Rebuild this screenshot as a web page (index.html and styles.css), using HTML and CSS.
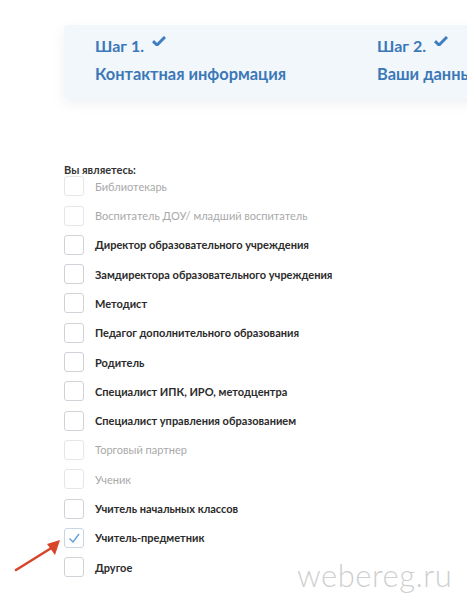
FILE: index.html
```html
<!DOCTYPE html>
<html lang="ru">
<head>
<meta charset="utf-8">
<title>Регистрация</title>
<link rel="stylesheet" href="styles.css">
</head>
<body>
<div class="page">
  <div class="steps">
    <div class="step step-first">
      <div class="step-title">Шаг 1.
        <svg class="step-check" viewBox="0 0 14 10" width="14" height="10"><path d="M1 5.2 L5 9 L13 1" fill="none" stroke="currentColor" stroke-width="3" stroke-linejoin="round"/></svg>
      </div>
      <div class="step-name">Контактная информация</div>
    </div>
    <div class="step">
      <div class="step-title">Шаг 2.
        <svg class="step-check" viewBox="0 0 14 10" width="14" height="10"><path d="M1 5.2 L5 9 L13 1" fill="none" stroke="currentColor" stroke-width="3" stroke-linejoin="round"/></svg>
      </div>
      <div class="step-name">Ваши данные</div>
    </div>
  </div>

  <form class="roles">
    <div class="roles-label">Вы являетесь:</div>
    <label class="role is-disabled"><span class="box"></span>Библиотекарь</label>
    <label class="role is-disabled"><span class="box"></span>Воспитатель ДОУ/ младший воспитатель</label>
    <label class="role"><span class="box"></span>Директор образовательного учреждения</label>
    <label class="role"><span class="box"></span>Замдиректора образовательного учреждения</label>
    <label class="role"><span class="box"></span>Методист</label>
    <label class="role"><span class="box"></span>Педагог дополнительного образования</label>
    <label class="role"><span class="box"></span>Родитель</label>
    <label class="role"><span class="box"></span>Специалист ИПК, ИРО, методцентра</label>
    <label class="role"><span class="box"></span>Специалист управления образованием</label>
    <label class="role is-disabled"><span class="box"></span>Торговый партнер</label>
    <label class="role is-disabled"><span class="box"></span>Ученик</label>
    <label class="role"><span class="box"></span>Учитель начальных классов</label>
    <label class="role is-checked"><span class="box"><svg viewBox="0 0 20 20" width="20" height="20"><path d="M5.5 10.5 L9 14 L15 6" fill="none" stroke="#5b9fd6" stroke-width="1.3"/></svg></span>Учитель-предметник</label>
    <label class="role"><span class="box"></span>Другое</label>
  </form>

  <svg class="pointer" viewBox="0 0 60 40" width="60" height="40">
    <path d="M2 33 L39 10" stroke="#d7462b" stroke-width="2.6" stroke-linecap="round"/>
    <path d="M46 3 L33 7 L41 18 Z" fill="#d7462b"/>
  </svg>

  <div class="mark">webereg.ru</div>
</div>
</body>
</html>
```

FILE: styles.css
```css
html, body {
  margin: 0;
  padding: 0;
  background: #fff;
}

.page {
  position: relative;
  width: 467px;
  height: 600px;
  overflow: hidden;
  font-family: Lato, "Noto Sans", sans-serif;
}

/* step header card; the second step runs past the right edge */
.steps {
  display: flex;
  margin: 25px 0 0 64px;
  padding: 13px 0 0 31px;
  height: 60px;
  width: 480px;
  background: #f2f7fc;
  box-shadow: 0 5px 12px rgba(120, 140, 170, 0.13);
  border-radius: 3px 0 0 3px;
  color: #3b78b7;
  font-weight: 700;
  white-space: nowrap;
}

.step {
  display: flex;
  flex-direction: column;
  gap: 12px;
}

.step-first {
  width: 282px;
  flex: none;
}

.step-title {
  display: flex;
  align-items: flex-start;
  gap: 8px;
  font-size: 16px;
  line-height: 16px;
}

.step-check {
  margin-top: -2px;
  color: #3f7fc0;
}

.step-name {
  font-size: 16.4px;
  line-height: 16px;
}

/* role checklist */
.roles {
  display: flex;
  flex-direction: column;
  gap: 9.3px;
  margin: 66px 0 0 64px;
  font-size: 11px;
  font-weight: 700;
  color: #2b2b2b;
}

.roles-label {
  line-height: 12px;
  margin-bottom: -9px;
  color: #333;
}

.role {
  display: flex;
  align-items: center;
  gap: 11px;
  height: 20px;
}

.box {
  flex: none;
  width: 18px;
  height: 18px;
  border: 1px solid #cfd3d8;
  border-radius: 3px;
  background: #fff;
}

.box svg {
  display: block;
  margin: -1px;
}

.role.is-disabled {
  color: #a9a9a9;
  font-weight: 400;
}

.role.is-disabled .box {
  border-color: #e4e6e9;
}

.role.is-checked .box {
  border-color: #c9d6e2;
}

/* annotation arrow */
.pointer {
  position: absolute;
  left: 14px;
  top: 537px;
}

/* site watermark */
.mark {
  position: absolute;
  left: 297px;
  top: 556px;
  font-family: Lato, sans-serif;
  font-weight: 300;
  font-size: 31px;
  letter-spacing: 0.5px;
  color: #cfcfcf;
}
```
